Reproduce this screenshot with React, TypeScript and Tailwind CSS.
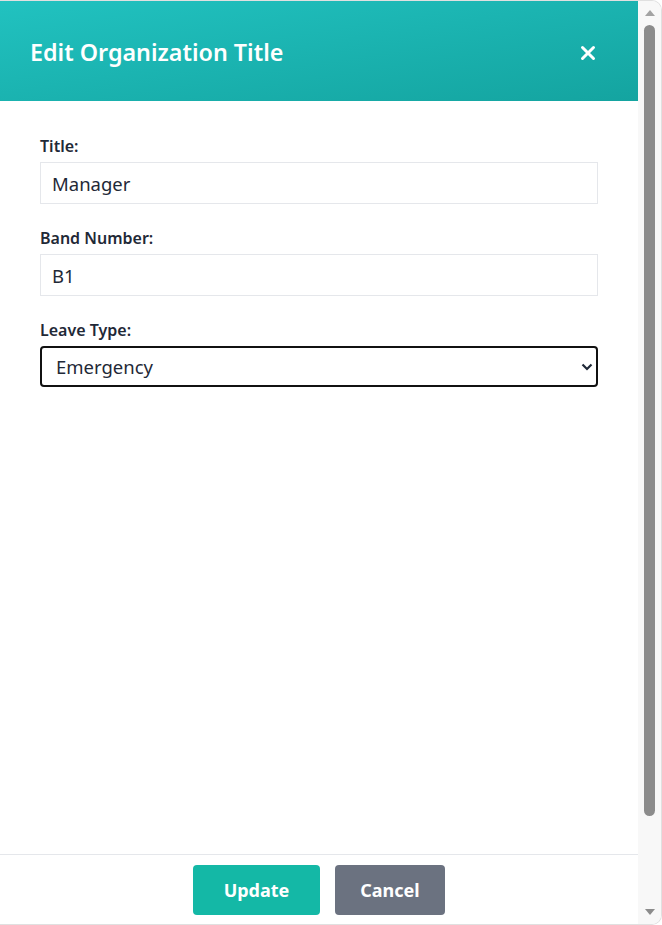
import React from 'react';

const font = { fontFamily: '"Noto Sans", "Open Sans", Arial, sans-serif' };

function Field({ label, value }: { label: string; value: string }) {
  return (
    <div className="mb-[23px]">
      <label className="block h-[22px] text-[16px] leading-[22px] font-semibold text-[#1f2937] mb-[5px]">
        {label}
      </label>
      <input
        readOnly
        value={value}
        className="block w-full h-[42px] px-[11px] border border-[#e5e7eb] text-[18.5px] text-[#1f2937] outline-none"
        style={font}
      />
    </div>
  );
}

function Scrollbar() {
  return (
    <div className="w-[23px] bg-[#f8f8f8] flex flex-col items-center">
      {/* up arrow */}
      <div className="mt-[9px] w-0 h-0 border-l-[5px] border-r-[5px] border-b-[6px] border-l-transparent border-r-transparent border-b-[#a3a3a3]" />
      {/* thumb */}
      <div className="mt-[9px] w-[11px] h-[791px] rounded-full bg-[#8c8c8c]" />
      <div className="flex-1" />
      {/* down arrow */}
      <div className="mb-[9px] w-0 h-0 border-l-[5px] border-r-[5px] border-t-[6px] border-l-transparent border-r-transparent border-t-[#8c8c8c]" />
    </div>
  );
}

export default function App() {
  return (
    <div className="w-[662px] h-[925px] bg-white" style={font}>
      <div className="flex h-full border-t border-b border-r border-[#e0e0e0] rounded-r-[10px] overflow-hidden">
        <div className="w-[638px] flex flex-col">
          {/* Header */}
          <div className="h-[100px] shrink-0 flex items-center justify-between pl-[30px] pr-[42px] bg-linear-to-br from-[#21c2c0] to-[#14a4a0]">
            <h2 className="mt-[3px] text-[23.3px] font-semibold text-white leading-none">Edit Organization Title</h2>
            <svg width="16" height="16" viewBox="0 0 16 16" className="mt-[4px]">
              <path d="M2.5 2.5 L13.5 13.5 M13.5 2.5 L2.5 13.5" stroke="white" strokeWidth="3" strokeLinecap="round" />
            </svg>
          </div>

          {/* Body */}
          <div className="flex-1 px-10 pt-[34px]">
            <Field label="Title:" value="Manager" />
            <Field label="Band Number:" value="B1" />
            <div>
              <label className="block h-[22px] text-[16px] leading-[22px] font-semibold text-[#1f2937] mb-[5px]">
                Leave Type:
              </label>
              <div className="relative">
                <select
                  defaultValue="Emergency"
                  className="block w-full h-[41px] pl-[14px] pr-8 border-2 border-[#111] rounded-[4px] bg-white text-[18.5px] text-[#1f2937] appearance-none outline-none"
                  style={font}
                >
                  <option>Emergency</option>
                  <option>Sick</option>
                  <option>Casual</option>
                </select>
                <svg
                  width="12"
                  height="8"
                  viewBox="0 0 12 8"
                  className="absolute right-[5px] top-[17px] pointer-events-none"
                >
                  <path d="M1.5 1.5 L6 6 L10.5 1.5" fill="none" stroke="#1f2937" strokeWidth="2.2" />
                </svg>
              </div>
            </div>
          </div>

          {/* Footer */}
          <div className="border-t border-[#e5e7eb] pt-[10px] pb-[9px] flex justify-center gap-[15px]">
            <button className="w-[127px] h-[50px] rounded-[4px] bg-[#14b8a6] text-white text-[18px] font-bold">
              Update
            </button>
            <button className="w-[110px] h-[50px] rounded-[4px] bg-[#6b7280] text-white text-[18px] font-bold">
              Cancel
            </button>
          </div>
        </div>
        <Scrollbar />
      </div>
    </div>
  );
}
